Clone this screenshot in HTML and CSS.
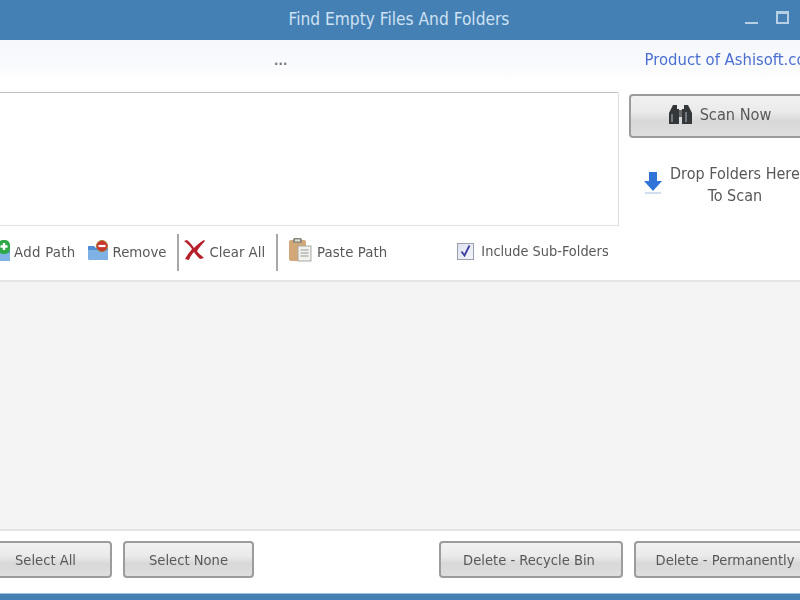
FILE: index.html
```html
<!DOCTYPE html>
<html lang="en">
<head>
<meta charset="utf-8">
<title>Find Empty Files And Folders</title>
<link rel="stylesheet" href="styles.css">
</head>
<body>
<div class="window">
  <header class="titlebar">
    <span class="title">Find Empty Files And Folders</span>
    <div class="controls">
      <span class="ctl-min"></span>
      <span class="ctl-max"></span>
    </div>
  </header>
  <div class="infobar">
    <span class="dots">...</span>
    <a class="product">Product of Ashisoft.com</a>
  </div>
  <section class="top">
    <div class="paths">
      <div class="pathbox"></div>
      <div class="toolbar">
        <div class="tool tool-add">
          <svg class="ic" width="16" height="24" viewBox="0 0 16 24"><path d="M0 9h3l2 2h10a1 1 0 0 1 1 1v9a1 1 0 0 1-1 1H0z" fill="#5c9bdc"/><path d="M0 14h16v7a1 1 0 0 1-1 1H0z" fill="#7fb4e6"/><rect x="4" y="1" width="12" height="14" rx="5" fill="#2fa84a"/><path d="M10 4v7M6.500 7.500h7" stroke="#fff" stroke-width="2.400"/></svg>
          <span>Add Path</span>
        </div>
        <div class="tool tool-remove">
          <svg class="ic" width="22" height="22" viewBox="0 0 22 22"><path d="M1 6h6l2 2h11a1 1 0 0 1 1 1v10a1 1 0 0 1-1 1H3a2 2 0 0 1-2-2z" fill="#4f8fd6"/><path d="M1 10h20v9a1 1 0 0 1-1 1H3a2 2 0 0 1-2-2z" fill="#7fb2e4"/><circle cx="15" cy="6" r="5.500" fill="#c9362e" stroke="#a8792c"/><path d="M11.500 6h7" stroke="#fff" stroke-width="2.200"/></svg>
          <span>Remove</span>
        </div>
        <span class="sep sep-a"></span>
        <div class="tool tool-clear">
          <svg class="ic" width="21" height="21" viewBox="0 0 21 21"><path d="M0 2l3-1c3 2 5 5 7 8 3-3 6-6 10-8l1 1c-3 3-6 7-8 10 2 3 5 5 7 7l-4 1c-2-2-4-4-6-7-2 2-4 5-5 8l-4-1c2-4 5-7 7-10C6 7 3 4 0 2z" fill="#b5202a"/></svg>
          <span>Clear All</span>
        </div>
        <span class="sep sep-b"></span>
        <div class="tool tool-paste">
          <svg class="ic" width="24" height="25" viewBox="0 0 24 25"><rect x="1" y="3" width="17" height="21" rx="2" fill="#d2a878"/><rect x="5" y="1" width="9" height="5" rx="1.500" fill="#8a8a80"/><rect x="7" y="2.500" width="5" height="2" fill="#e6e0d4"/><rect x="10" y="9" width="13" height="15" fill="#f1f1ee" stroke="#a9a9a2"/><path d="M12.500 13h8M12.500 16h8M12.500 19h8" stroke="#9a9a9a"/></svg>
          <span>Paste Path</span>
        </div>
        <label class="check">
          <span class="box"><svg width="11" height="12" viewBox="0 0 11 12"><path d="M1.500 6.500l3 4 5-10" fill="none" stroke="#3b3f9e" stroke-width="1.800"/></svg></span>
          <span>Include Sub-Folders</span>
        </label>
      </div>
    </div>
    <aside class="side">
      <button class="btn btn-scan">
        <svg width="23" height="24" viewBox="0 0 23 22"><path d="M4 1h4v4h2v15H0V9zM15 1h4l4 8v11H13V5h2z" fill="#33373a"/><rect x="10" y="6" width="3" height="7" fill="#6a6a6a"/><path d="M3 10v8M17 8v10" stroke="#8a8f94" stroke-width="1.500"/></svg>
        <span>Scan Now</span>
      </button>
      <div class="drop">
        <svg class="drop-arrow" width="20" height="23" viewBox="0 0 20 23"><path d="M6 1h8v9h5l-9 10L1 10h5z" fill="#2f74d6"/><path d="M2 22h16" stroke="#c5d5e8" stroke-width="1.500"/></svg>
        <p class="drop-text">Drop Folders Here<br>To Scan</p>
      </div>
    </aside>
  </section>
  <main class="list"></main>
  <footer class="footer">
    <button class="btn btn-all">Select All</button>
    <button class="btn btn-none">Select None</button>
    <button class="btn btn-recycle">Delete - Recycle Bin</button>
    <button class="btn btn-perm">Delete - Permanently</button>
  </footer>
  <div class="bottombar"></div>
</div>
</body>
</html>
```
FILE: styles.css
```css
* { box-sizing: border-box; }
html, body { margin: 0; padding: 0; height: 100%; overflow: hidden; background: #fff; }
body { font-family: "DejaVu Sans Condensed", "DejaVu Sans", sans-serif; font-stretch: condensed; font-size: 14.800px; color: #585858; }
.window { width: 800px; height: 600px; display: flex; flex-direction: column; overflow: hidden; filter: blur(0.35px); }

.titlebar { height: 40px; flex: none; background: #4480b4; display: flex; align-items: center; justify-content: center; position: relative; padding-bottom: 2px; }
.title { color: #cfe2f3; font-size: 17.200px; margin-right: 2px; }
.controls { position: absolute; top: 11px; left: 745px; display: flex; gap: 18px; }
.ctl-min { width: 13px; height: 2px; margin-top: 11px; background: #b7cfe4; }
.ctl-max { width: 13px; height: 13px; border: 2px solid #b7cfe4; border-top-width: 3px; }

.infobar { height: 42px; flex: none; display: flex; align-items: center; background: linear-gradient(#f7f8fd, #f9fafd 55%, #fff); padding-bottom: 2px; }
.dots { margin-left: 274px; font-size: 13px; font-weight: bold; color: #777; }
.product { margin-left: auto; margin-right: -20px; margin-bottom: 2px; color: #4a6fd0; font-size: 16.500px; white-space: nowrap; }

.top { height: 200px; flex: none; display: flex; padding-top: 10px; border-bottom: 2px solid #e6e6e6; }
.paths { width: 619px; flex: none; display: flex; flex-direction: column; }
.pathbox { height: 134px; flex: none; margin-left: -3px; background: #fff; border: 1px solid #e3e3e3; border-top: 1px solid #bdbdbd; border-right-color: #dcdcdc; border-radius: 0 2px 0 0; }
.toolbar { flex: 1; display: flex; align-items: center; padding-bottom: 2px; }
.tool { display: flex; align-items: center; white-space: nowrap; }
.tool span { margin-top: -2px; }
.ic { flex: none; margin-top: -2px; }
.tool-clear .ic, .tool-paste .ic { margin-top: -6px; }
.tool-add { margin-left: -6px; }
.tool-add span { margin-left: 4px; letter-spacing: 0.3px; }
.tool-remove { margin-left: 11px; }
.tool-remove span { margin-left: 4px; }
.sep { width: 2px; height: 37px; background: #a8a8a8; flex: none; }
.sep-a { margin-left: 10px; }
.tool-clear { margin-left: 5px; }
.tool-clear span { margin-left: 5px; }
.sep-b { margin-left: 11px; }
.tool-paste { margin-left: 10px; }
.tool-paste span { margin-left: 5px; letter-spacing: 0.1px; }
.check { display: flex; align-items: center; margin-left: 70px; margin-bottom: 2px; white-space: nowrap; font-size: 14.400px; }
.box { width: 17px; height: 17px; border: 1px solid #9aa0ad; background: linear-gradient(135deg, #dfe2ee, #f3f4fa); display: flex; align-items: center; justify-content: center; margin-right: 7px; }

.side { flex: none; width: 181px; padding-left: 10px; }
.btn { font-family: inherit; font-stretch: inherit; font-size: 14.600px; color: #585858; border: 2px solid #9c9c9c; border-radius: 4px; background: linear-gradient(#f2f2f2, #eaeaea 40%, #d8d8d8 62%, #dedede); display: flex; align-items: center; justify-content: center; padding: 0; flex: none; white-space: nowrap; }
.btn-scan { width: 182px; height: 44px; margin-top: 2px; gap: 8px; font-size: 16.200px; padding-bottom: 3px; }
.drop { display: flex; margin-top: 25px; margin-left: 14px; white-space: nowrap; }
.drop-arrow { margin-top: 8px; flex: none; }
.drop-text { margin: 0 0 0 7px; font-size: 16px; line-height: 22px; text-align: center; }

.list { flex: 1; background: #f4f4f4; border-bottom: 2px solid #e4e4e4; }

.footer { height: 62px; flex: none; display: flex; align-items: flex-start; padding-top: 10px; background: #fff; }
.footer .btn { height: 37px; }
.btn-all { width: 130px; margin-left: -18px; padding-right: 3px; }
.btn-none { width: 131px; margin-left: 11px; }
.btn-recycle { width: 184px; margin-left: 185px; padding-right: 4px; }
.btn-perm { width: 184px; margin-left: 11px; padding-right: 2px; }

.bottombar { height: 7px; flex: none; background: #4480b4; border-top: 1px solid #9cc2e0; }
```
